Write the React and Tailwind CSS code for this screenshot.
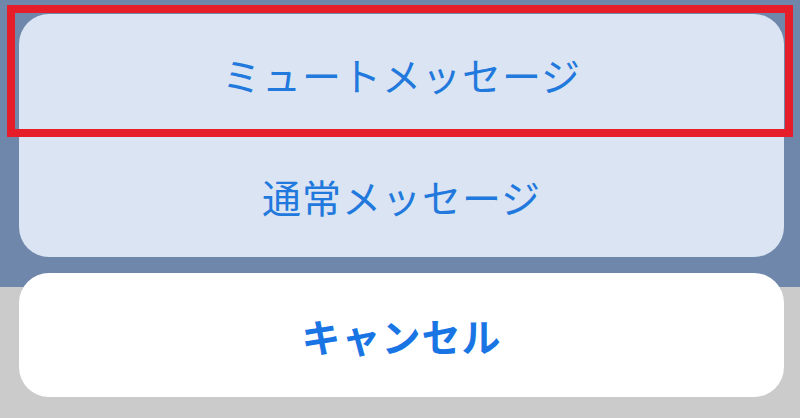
import React from "react";

const font = { fontFamily: '"Noto Sans CJK JP", "Noto Sans", sans-serif' };

function SheetItem({ label }) {
  return (
    <button
      type="button"
      className="flex h-[121px] w-full items-center justify-center text-[39px] font-normal tracking-[1px] text-[#2178dd]"
    >
      {label}
    </button>
  );
}

export default function App() {
  return (
    <div
      className="relative h-[418px] w-[800px] overflow-hidden bg-[linear-gradient(to_bottom,#6e87ab_287px,#cbcbcb_287px)] pt-[14px] pl-[19px] pr-[16px]"
      style={font}
    >
      <div className="flex flex-col overflow-hidden rounded-[30px] bg-[#dae4f2]">
        <SheetItem label="ミュートメッセージ" />
        <div className="h-px bg-[#b9c6d8]" />
        <SheetItem label="通常メッセージ" />
      </div>

      <button
        type="button"
        className="mt-[16px] flex h-[124px] w-full items-center justify-center rounded-[30px] bg-white text-[39px] font-bold tracking-[1px] text-[#1a75e4]"
      >
        キャンセル
      </button>

      {/* highlight box */}
      <div className="pointer-events-none absolute left-[7px] top-[5px] h-[132px] w-[786px] border-[8px] border-[#e61e2a]" />
    </div>
  );
}
